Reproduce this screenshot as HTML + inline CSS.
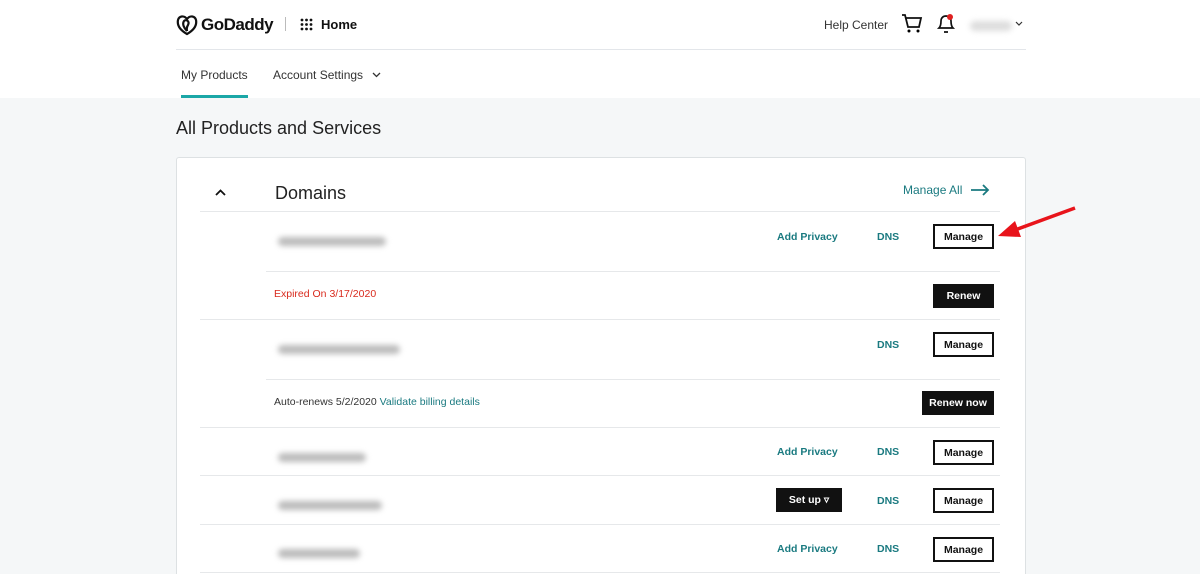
<!DOCTYPE html>
<html style="height:574px;overflow:hidden"><head><style>
*{margin:0;padding:0;box-sizing:border-box}
body{width:1200px;height:574px;overflow:hidden;background:#f5f7f8;font-family:"Liberation Sans",sans-serif;position:relative;color:#111}
.top{position:absolute;left:0;top:0;width:1200px;height:98px;background:#fff}
.a{position:absolute;white-space:nowrap}
.card{position:absolute;left:176px;top:157px;width:850px;height:430px;background:#fff;border:1px solid #dde1e3;border-radius:3px}
.ln{position:absolute;height:1px;background:#e6e8ea}
.teal{color:#1a7a80;font-weight:bold;font-size:10.5px}
.btn{position:absolute;border:2px solid #111;background:#fff;font-size:10.5px;font-weight:bold;display:flex;align-items:center;justify-content:center;height:25px}
.bb{position:absolute;background:#111;color:#fff;font-size:10.5px;font-weight:bold;display:flex;align-items:center;justify-content:center;height:24px}
.blur{position:absolute;height:9px;background:#bbb;border-radius:5px;filter:blur(3px)}
</style></head><body>
<div class="top"></div>
<svg class="a" style="left:176px;top:14px" width="22" height="22" viewBox="0 0 22 22"><path d="M11 20C4 16 1 11 2 6 3 2 8 1 11 5 14 1 19 2 20 6 21 11 18 16 11 20Z M11 17C8 14 6 10 8 7 10 5 14 7 12 11 10 14 11 16 11 17" fill="none" stroke="#111" stroke-width="2.2"/></svg>
<div class="a" style="left:201px;top:15px;font-size:17px;font-weight:bold;letter-spacing:-0.5px">GoDaddy</div>
<div class="a" style="left:285px;top:17px;width:1px;height:14px;background:#bbb"></div>
<svg class="a" style="left:300px;top:18px" width="13" height="13"><g fill="#111"><circle cx="2" cy="2" r="1.4"/><circle cx="6.5" cy="2" r="1.4"/><circle cx="11" cy="2" r="1.4"/><circle cx="2" cy="6.5" r="1.4"/><circle cx="6.5" cy="6.5" r="1.4"/><circle cx="11" cy="6.5" r="1.4"/><circle cx="2" cy="11" r="1.4"/><circle cx="6.5" cy="11" r="1.4"/><circle cx="11" cy="11" r="1.4"/></g></svg>
<div class="a" style="left:321px;top:17px;font-size:13px;font-weight:bold">Home</div>
<div class="a" style="left:824px;top:18px;font-size:12px;color:#333">Help Center</div>
<svg class="a" style="left:901px;top:13px" width="22" height="20"><path d="M1 2H4L7 14H18L20 5H5" fill="none" stroke="#111" stroke-width="1.8"/><circle cx="8" cy="18" r="1.5"/><circle cx="17" cy="18" r="1.5"/></svg>
<svg class="a" style="left:936px;top:13px" width="20" height="22"><path d="M3 15C5 13 5 10 5 8 5 5 7 3 10 3 13 3 15 5 15 8 15 10 15 13 17 15Z M8 19H12" fill="none" stroke="#111" stroke-width="1.7"/><circle cx="14" cy="4" r="3" fill="#e02020"/></svg>
<div class="blur" style="left:970px;top:21px;width:42px;height:10px;background:#ddd"></div>
<svg class="a" style="left:1015px;top:21px" width="8" height="6"><path d="M1 1L4 4 7 1" fill="none" stroke="#333" stroke-width="1.2"/></svg>
<div class="ln" style="left:176px;top:49px;width:850px;background:#e3e6ea"></div>
<div class="a" style="left:181px;top:68px;font-size:12px;color:#333">My Products</div>
<div class="a" style="left:181px;top:95px;width:67px;height:3px;background:#1ba7a7"></div>
<div class="a" style="left:273px;top:68px;font-size:12px;color:#333">Account Settings</div>
<svg class="a" style="left:372px;top:72px" width="9" height="6"><path d="M1 1L4.5 4.5 8 1" fill="none" stroke="#333" stroke-width="1.3"/></svg>
<div class="a" style="left:176px;top:118px;font-size:18px;color:#222">All Products and Services</div>
<div class="card"></div>
<svg class="a" style="left:215px;top:189px" width="11" height="8"><path d="M1 6L5.5 1.5 10 6" fill="none" stroke="#111" stroke-width="1.8"/></svg>
<div class="a" style="left:275px;top:183px;font-size:18px;color:#222">Domains</div>
<div class="a" style="left:903px;top:183px;font-size:12px;color:#1a7a80">Manage All</div>
<svg class="a" style="left:970px;top:184px" width="20" height="12"><path d="M1 6H18M13 1L18 6 13 11" fill="none" stroke="#1a7a80" stroke-width="1.8"/></svg>
<div class="ln" style="left:200px;top:211px;width:800px"></div>
<div class="ln" style="left:266px;top:271px;width:734px"></div>
<div class="ln" style="left:200px;top:319px;width:800px"></div>
<div class="ln" style="left:266px;top:379px;width:734px"></div>
<div class="ln" style="left:200px;top:427px;width:800px"></div>
<div class="ln" style="left:200px;top:475px;width:800px"></div>
<div class="ln" style="left:200px;top:524px;width:800px"></div>
<div class="ln" style="left:200px;top:572px;width:800px"></div>
<div class="blur" style="left:278px;top:237px;width:108px"></div>
<div class="a teal" style="left:777px;top:231px">Add Privacy</div>
<div class="a teal" style="left:877px;top:231px">DNS</div>
<div class="btn" style="left:933px;top:224px;width:61px">Manage</div>
<div class="a" style="left:274px;top:288px;font-size:10.5px;color:#d92b1e">Expired On 3/17/2020</div>
<div class="bb" style="left:933px;top:284px;width:61px">Renew</div>
<div class="blur" style="left:278px;top:345px;width:122px"></div>
<div class="a teal" style="left:877px;top:339px">DNS</div>
<div class="btn" style="left:933px;top:332px;width:61px">Manage</div>
<div class="a" style="left:274px;top:396px;font-size:10.5px;color:#333">Auto-renews 5/2/2020 <span style="color:#1a7a80">Validate billing details</span></div>
<div class="bb" style="left:922px;top:391px;width:72px">Renew now</div>
<div class="blur" style="left:278px;top:453px;width:88px"></div>
<div class="a teal" style="left:777px;top:446px">Add Privacy</div>
<div class="a teal" style="left:877px;top:446px">DNS</div>
<div class="btn" style="left:933px;top:440px;width:61px">Manage</div>
<div class="blur" style="left:278px;top:501px;width:104px"></div>
<div class="bb" style="left:776px;top:488px;width:66px">Set up ▿</div>
<div class="a teal" style="left:877px;top:495px">DNS</div>
<div class="btn" style="left:933px;top:488px;width:61px">Manage</div>
<div class="blur" style="left:278px;top:549px;width:82px"></div>
<div class="a teal" style="left:777px;top:543px">Add Privacy</div>
<div class="a teal" style="left:877px;top:543px">DNS</div>
<div class="btn" style="left:933px;top:537px;width:61px">Manage</div>
<svg class="a" style="left:995px;top:203px" width="85" height="40"><path d="M80 5L20 27" stroke="#e8141b" stroke-width="3.5"/><path d="M3 33L20 18 26 34Z" fill="#e8141b"/></svg>
</body></html>
